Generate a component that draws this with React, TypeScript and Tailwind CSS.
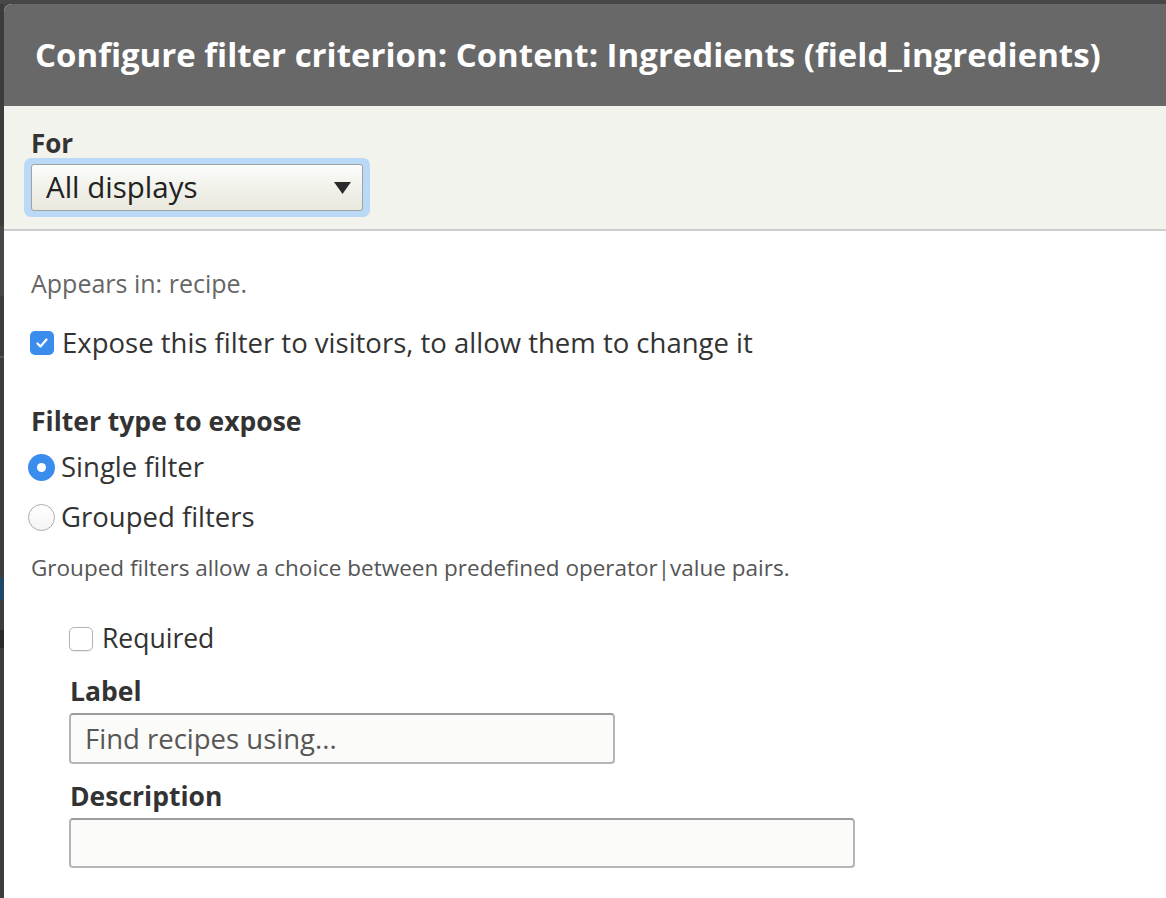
import React from 'react';

function CheckBox({ checked }: { checked: boolean }) {
  if (checked) {
    return (
      <span className="flex h-[24px] w-[24px] shrink-0 items-center justify-center rounded-[5px] bg-[#3b8ded]">
        <svg viewBox="0 0 16 16" className="h-[16px] w-[16px]" fill="none">
          <path d="M3.5 8.5 L6.5 11.5 L12.5 4.5" stroke="#fff" strokeWidth="2.2" strokeLinecap="round" strokeLinejoin="round" />
        </svg>
      </span>
    );
  }
  return (
    <span className="block h-[24px] w-[24px] shrink-0 rounded-[5px] border border-[#b3b3b3] bg-white shadow-[0_1px_1px_rgba(0,0,0,0.08)]" />
  );
}

function Radio({ checked }: { checked: boolean }) {
  if (checked) {
    return (
      <span className="flex h-[27px] w-[27px] shrink-0 items-center justify-center rounded-full bg-[#3b8ded]">
        <span className="block h-[9px] w-[9px] rounded-full bg-white" />
      </span>
    );
  }
  return (
    <span className="block h-[27px] w-[27px] shrink-0 rounded-full border border-[#ababab] bg-gradient-to-b from-white to-[#f4f4f4]" />
  );
}

export default function App() {
  return (
    <div className="flex h-[898px] overflow-hidden bg-[#474747] pt-[4px] font-['Open_Sans',sans-serif] text-[#333]">
      {/* backdrop peeking through on the left */}
      <div className="flex w-[4px] shrink-0 flex-col bg-[#3c3c3c]">
        <div className="h-[222px]" />
        <div className="h-[70px] bg-[#474747]" />
        <div className="h-[60px]" />
        <div className="h-[2px] bg-[#555]" />
        <div className="h-[220px]" />
        <div className="h-[22px] bg-[#1f4766]" />
        <div className="h-[30px]" />
        <div className="h-[18px] bg-[#2a2a2a]" />
      </div>

      {/* dialog */}
      <div className="flex-1 overflow-hidden rounded-tl-[8px] bg-white">
        <div className="flex h-[102px] items-center whitespace-nowrap bg-[#686868] pl-[31px] text-[33px] font-bold text-white">
          Configure filter criterion: Content: Ingredients (field_ingredients)
        </div>

        <div className="h-[125px] border-b-2 border-[#cdcdcd] bg-[#f3f3ee] pl-[20px] pt-[22px]">
          <div className="h-[30px] pl-[7px] text-[26px] font-bold leading-[30px]">For</div>
          <div className="w-[346px] rounded-[7px] bg-[#b9d9f6] px-[7px] py-[6px]">
            <div className="flex h-[47px] items-center justify-between rounded-[3px] border border-[#a2a2a2] bg-gradient-to-b from-[#fcfcfa] to-[#e8e8dd] pl-[14px] pr-[11px] text-[29.5px] text-[#222]">
              <span>All displays</span>
              <svg viewBox="0 0 17 12" className="h-[12px] w-[17px]">
                <path d="M0 0 H17 L8.5 12 Z" fill="#2b2b2b" />
              </svg>
            </div>
          </div>
        </div>

        <div className="pl-[27px] pt-[37px]">
          <div className="h-[30px] text-[25px] leading-[30px] text-[#666]">Appears in: recipe.</div>

          <div className="mt-[30px] flex h-[30px] items-center gap-[8px] text-[27.5px]">
            <span className="-ml-[1px]"><CheckBox checked /></span>
            <span>Expose this filter to visitors, to allow them to change it</span>
          </div>

          <div className="mt-[48px] h-[30px] text-[26.5px] font-bold leading-[30px]">Filter type to expose</div>

          <div className="mt-[16px] flex h-[30px] items-center gap-[6px] text-[27.5px]">
            <span className="-ml-[3px]"><Radio checked /></span>
            <span>Single filter</span>
          </div>

          <div className="mt-[20px] flex h-[30px] items-center gap-[6px] text-[27.5px]">
            <span className="-ml-[3px]"><Radio checked={false} /></span>
            <span>Grouped filters</span>
          </div>

          <div className="mt-[21px] h-[30px] text-[22.5px] leading-[30px] text-[#555]">
            Grouped filters allow a choice between predefined operator|value pairs.
          </div>

          <div className="ml-[38px]">
            <div className="mt-[41px] flex h-[30px] items-center gap-[9px] text-[26.5px]">
              <CheckBox checked={false} />
              <span>Required</span>
            </div>

            <div className="mt-[22px] h-[30px] pl-[1px] text-[26.5px] font-bold leading-[30px]">Label</div>
            <div className="mt-[7px] flex h-[51px] w-[546px] items-center rounded-[4px] border-2 border-[#b5b5b5] border-t-[#9c9c9c] bg-[#fbfbf9] pl-[14px] text-[27.5px] text-[#575757]">
              Find recipes using...
            </div>

            <div className="mt-[17px] h-[30px] pl-[1px] text-[26.5px] font-bold leading-[30px]">Description</div>
            <div className="mt-[7px] h-[50px] w-[786px] rounded-[4px] border-2 border-[#b5b5b5] border-t-[#9c9c9c] bg-[#fbfbf9]" />
          </div>
        </div>
      </div>
    </div>
  );
}
